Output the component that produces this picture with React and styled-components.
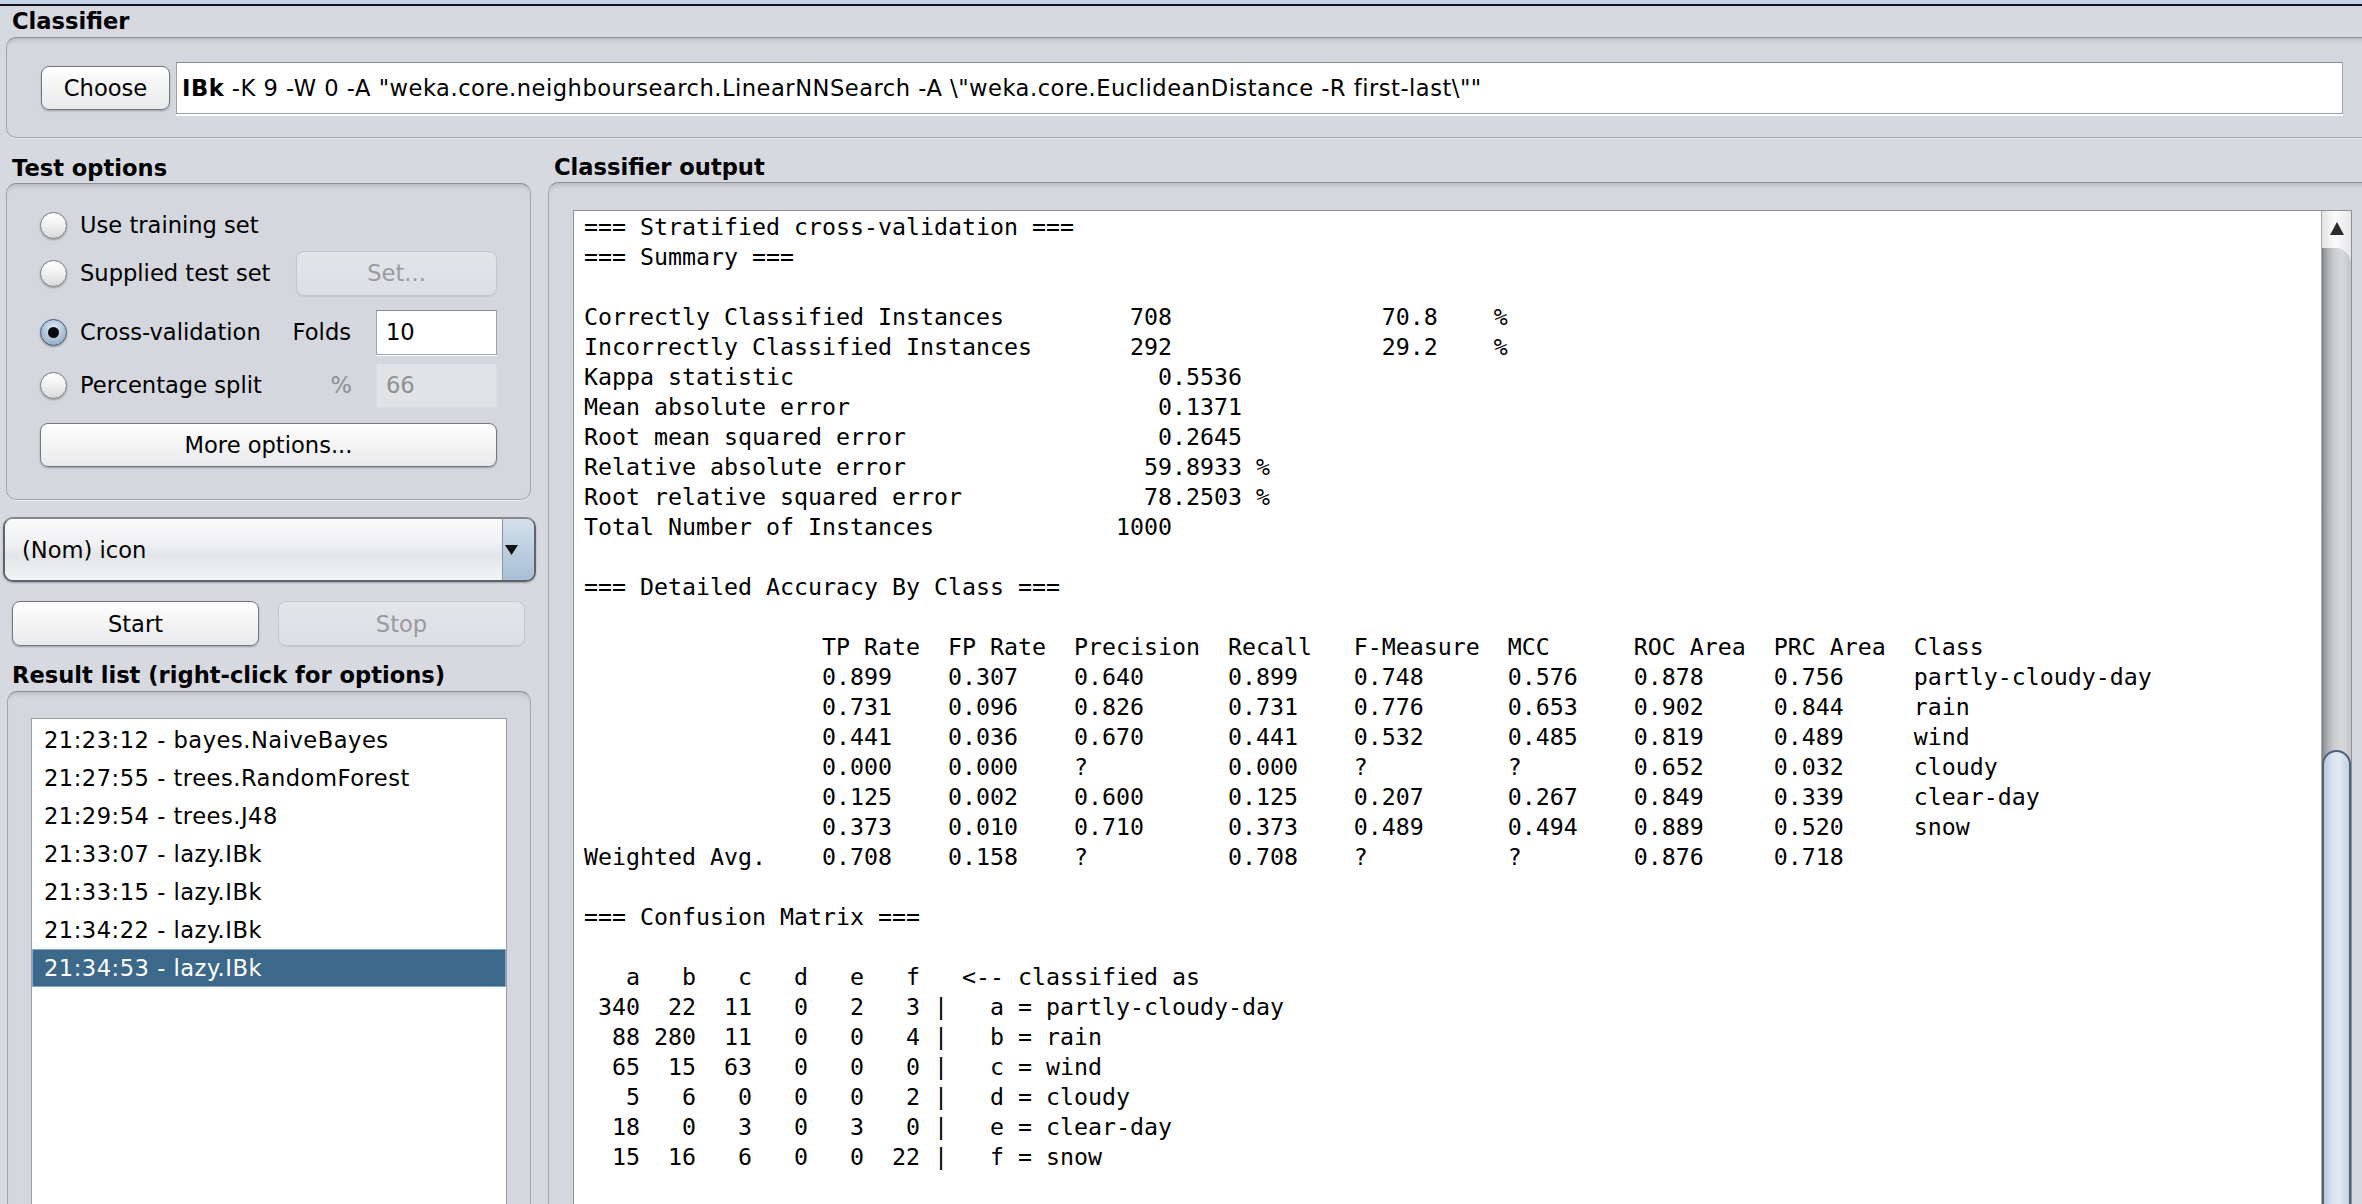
import React from "react";
import styled, { createGlobalStyle } from "styled-components";

const UI_FONT = `"DejaVu Sans", "Liberation Sans", sans-serif`;
const MONO_FONT = `"DejaVu Sans Mono", "Liberation Mono", monospace`;
const BG = "#d6d9e0";

const GlobalStyle = createGlobalStyle`
  html, body { margin: 0; padding: 0; background: ${BG}; }
  body { font-family: ${UI_FONT}; font-size: 22.6px; color: #000; overflow: hidden; }
  * { box-sizing: border-box; }
`;

const Window = styled.div`
  width: 2362px;
  height: 1204px;
  overflow: hidden;
  display: flex;
  flex-direction: column;
  background: ${BG};
`;

const TopStrip = styled.div`
  flex: none;
  height: 6px;
  background: #c6d6ea;
  border-bottom: 2px solid #11131c;
`;

const SectionTitle = styled.div`
  flex: none;
  height: ${(p) => p.$h ?? 30}px;
  line-height: 30px;
  margin-top: ${(p) => p.$mt ?? 0}px;
  padding-left: ${(p) => p.$pl ?? 12}px;
  font-weight: bold;
  white-space: nowrap;
`;

const GroupBox = styled.div`
  flex: none;
  border: 1px solid #a2a5ab;
  border-top-color: #8b8e94;
  border-radius: 10px;
  background: #d4d7de;
  box-shadow: inset 0 5px 4px -3px rgba(0, 0, 0, 0.14), 0 1px 0 rgba(255, 255, 255, 0.5);
`;

const ClassifierBox = styled(GroupBox)`
  margin: 0 -12px 0 6px;
  height: 101px;
  display: flex;
  align-items: center;
  padding: 0 30px 0 34px;
`;

const AquaButton = styled.button`
  flex: none;
  font: inherit;
  width: ${(p) => p.$w}px;
  height: ${(p) => p.$h ?? 45}px;
  padding: 0;
  color: ${(p) => (p.disabled ? "#9a9b9e" : "#000")};
  border: 1px solid ${(p) => (p.disabled ? "#c4c7cc" : "#76787d")};
  border-radius: 8px;
  background: ${(p) =>
    p.disabled
      ? "linear-gradient(#e3e5e9, #dcdfe4)"
      : "linear-gradient(#ffffff, #f6f6f7 40%, #e9eaec 100%)"};
  box-shadow: ${(p) => (p.disabled ? "0 1px 1px rgba(0,0,0,0.08)" : "0 1px 2px rgba(0,0,0,0.28)")};
  white-space: nowrap;
`;

const CommandField = styled.div`
  flex: 1;
  height: 52px;
  margin-left: 6px;
  line-height: 50px;
  padding-left: 5px;
  letter-spacing: 0.5px;
  background: #fff;
  border: 1px solid #9fa1a5;
  border-top-color: #8a8c90;
  box-shadow: 0 2px 0 #fff;
  white-space: pre;
  overflow: hidden;
`;

const Columns = styled.div`
  flex: 1;
  min-height: 0;
  display: grid;
  grid-template-columns: 548px 1fr;
`;

const Column = styled.div`
  display: flex;
  flex-direction: column;
  min-height: 0;
  min-width: 0;
`;

const TestBox = styled(GroupBox)`
  margin-left: 6px;
  width: 525px;
  height: 317px;
  display: flex;
  flex-direction: column;
  padding: 17px 33px 0 33px;
`;

const OptionRow = styled.div`
  flex: none;
  height: ${(p) => p.$h ?? 48}px;
  margin-top: ${(p) => p.$mt ?? 0}px;
  display: flex;
  align-items: center;
`;

const RadioLabel = styled.label`
  flex: 1;
  display: flex;
  align-items: center;
  gap: 13px;
  white-space: nowrap;
`;

const RadioCircle = styled.span`
  flex: none;
  width: 27px;
  height: 27px;
  border-radius: 50%;
  display: flex;
  align-items: center;
  justify-content: center;
  border: 1px solid ${(p) => (p.$checked ? "#3f5873" : "#7b7d82")};
  background: ${(p) =>
    p.$checked
      ? "radial-gradient(circle at 50% 35%, #e6eef6 0%, #b5c9dc 45%, #7f9cb8 100%)"
      : "linear-gradient(#ffffff, #f0f0f1 50%, #d9dadc)"};
  box-shadow: 0 1px 2px rgba(0, 0, 0, 0.3);
  &::after {
    content: "";
    display: ${(p) => (p.$checked ? "block" : "none")};
    width: 11px;
    height: 11px;
    border-radius: 50%;
    background: #0a0a0a;
  }
`;

const FieldGroup = styled.div`
  flex: none;
  display: flex;
  align-items: center;
  gap: ${(p) => p.$gap ?? 24}px;
`;

const FieldLabel = styled.span`
  color: ${(p) => (p.$muted ? "#8d8e91" : "#000")};
`;

const SmallField = styled.div`
  width: 121px;
  height: 45px;
  display: flex;
  align-items: center;
  padding-left: 9px;
  color: ${(p) => (p.$disabled ? "#8f9093" : "#000")};
  background: ${(p) => (p.$disabled ? "#e1e3e7" : "#fff")};
  border: 1px solid ${(p) => (p.$disabled ? "#d9dce0" : "#a1a3a7")};
  border-top-color: ${(p) => (p.$disabled ? "#d2d5da" : "#8a8c90")};
  box-shadow: ${(p) => (p.$disabled ? "none" : "0 1px 0 #fff")};
`;

const Combo = styled.div`
  flex: none;
  margin: 17px 0 0 3px;
  width: 533px;
  height: 65px;
  display: flex;
  border: 2px solid #5f636b;
  border-top-color: #85888e;
  border-radius: 10px;
  overflow: hidden;
  box-shadow: 0 1px 2px rgba(0, 0, 0, 0.25);
`;

const ComboText = styled.div`
  flex: 1;
  display: flex;
  align-items: center;
  padding-left: 17px;
  background: linear-gradient(#fbfbfc, #f0f1f3 40%, #e4e5e8 60%, #f3f4f6);
`;

const ComboArrow = styled.div`
  flex: none;
  width: 32px;
  display: flex;
  align-items: center;
  padding-left: 2px;
  border-left: 1px solid #8995a3;
  background: linear-gradient(#d5e1ec, #bccfe0 50%, #a8bfd5);
`;

const ButtonRow = styled.div`
  flex: none;
  margin-top: 19px;
  padding-left: 12px;
  display: flex;
  gap: 19px;
`;

const ResultBox = styled(GroupBox)`
  flex: 1;
  margin: 1px 0 -30px 7px;
  width: 524px;
  padding: 26px 23px 0 23px;
  display: flex;
`;

const ResultList = styled.div`
  flex: 1;
  background: #fff;
  border: 1px solid #9a9da2;
  padding-top: 2px;
`;

const ResultItem = styled.div`
  height: 38px;
  display: flex;
  align-items: center;
  padding-left: 11px;
  letter-spacing: 0.5px;
  white-space: nowrap;
  color: ${(p) => (p.$selected ? "#fff" : "#000")};
  background: ${(p) => (p.$selected ? "#3c6889" : "transparent")};
  border: 1px solid ${(p) => (p.$selected ? "#80a7cd" : "transparent")};
`;

const OutputBox = styled(GroupBox)`
  flex: 1;
  margin: 0 -12px -30px 0;
  padding: 27px 21px 0 24px;
  display: flex;
`;

const OutputArea = styled.div`
  flex: 1;
  display: flex;
  background: #fff;
  border: 1px solid #8e9196;
  min-width: 0;
`;

const OutputText = styled.pre`
  flex: 1;
  margin: 0;
  padding: 1px 0 0 10px;
  font-family: ${MONO_FONT};
  font-size: 23.25px;
  line-height: 30px;
  color: #000;
  overflow: hidden;
`;

const Scrollbar = styled.div`
  flex: none;
  width: 30px;
  display: flex;
  flex-direction: column;
  border-left: 1px solid #a7a9ad;
  background: linear-gradient(to right, #e2e3e5, #fbfbfc 45%, #e6e7e9);
`;

const ScrollUp = styled.div`
  flex: none;
  height: 37px;
  display: flex;
  justify-content: center;
  padding-top: 11px;
`;

const ScrollTrack = styled.div`
  flex: 1;
  position: relative;
  border-top-right-radius: 15px 16px;
  background: linear-gradient(to right, #7f8286 0%, #a5a7ab 14%, #c9cbce 40%, #d7d8da 70%, #c3c5c8 100%);
`;

const ScrollThumb = styled.div`
  position: absolute;
  left: 0;
  right: 0;
  top: 502px;
  bottom: -10px;
  border: 2px solid #4f6177;
  border-radius: 16px 16px 0 0;
  background: linear-gradient(to right, #b4c8db, #d9e5f0 35%, #e3ecf5 60%, #bfd1e2);
`;

const OUTPUT = `=== Stratified cross-validation ===
=== Summary ===

Correctly Classified Instances         708               70.8    %
Incorrectly Classified Instances       292               29.2    %
Kappa statistic                          0.5536
Mean absolute error                      0.1371
Root mean squared error                  0.2645
Relative absolute error                 59.8933 %
Root relative squared error             78.2503 %
Total Number of Instances             1000     

=== Detailed Accuracy By Class ===

                 TP Rate  FP Rate  Precision  Recall   F-Measure  MCC      ROC Area  PRC Area  Class
                 0.899    0.307    0.640      0.899    0.748      0.576    0.878     0.756     partly-cloudy-day
                 0.731    0.096    0.826      0.731    0.776      0.653    0.902     0.844     rain
                 0.441    0.036    0.670      0.441    0.532      0.485    0.819     0.489     wind
                 0.000    0.000    ?          0.000    ?          ?        0.652     0.032     cloudy
                 0.125    0.002    0.600      0.125    0.207      0.267    0.849     0.339     clear-day
                 0.373    0.010    0.710      0.373    0.489      0.494    0.889     0.520     snow
Weighted Avg.    0.708    0.158    ?          0.708    ?          ?        0.876     0.718     

=== Confusion Matrix ===

   a   b   c   d   e   f   <-- classified as
 340  22  11   0   2   3 |   a = partly-cloudy-day
  88 280  11   0   0   4 |   b = rain
  65  15  63   0   0   0 |   c = wind
   5   6   0   0   0   2 |   d = cloudy
  18   0   3   0   3   0 |   e = clear-day
  15  16   6   0   0  22 |   f = snow
`;

const RESULTS = [
  "21:23:12 - bayes.NaiveBayes",
  "21:27:55 - trees.RandomForest",
  "21:29:54 - trees.J48",
  "21:33:07 - lazy.IBk",
  "21:33:15 - lazy.IBk",
  "21:34:22 - lazy.IBk",
  "21:34:53 - lazy.IBk",
];

const COMMAND =
  ' -K 9 -W 0 -A "weka.core.neighboursearch.LinearNNSearch -A \\"weka.core.EuclideanDistance -R first-last\\""';

function Radio({ checked, children }) {
  return (
    <RadioLabel>
      <RadioCircle $checked={checked} />
      {children}
    </RadioLabel>
  );
}

export default function App() {
  return (
    <>
      <GlobalStyle />
      <Window>
        <TopStrip />
        <SectionTitle $h={31}>Classifier</SectionTitle>
        <ClassifierBox>
          <AquaButton $w={129} $h={44}>Choose</AquaButton>
          <CommandField>
            <b>IBk</b>
            {COMMAND}
          </CommandField>
        </ClassifierBox>

        <Columns>
          <Column>
            <SectionTitle $mt={15}>Test options</SectionTitle>
            <TestBox>
              <OptionRow>
                <Radio>Use training set</Radio>
              </OptionRow>
              <OptionRow>
                <Radio>Supplied test set</Radio>
                <AquaButton $w={201} disabled>
                  Set...
                </AquaButton>
              </OptionRow>
              <OptionRow $mt={11}>
                <Radio checked>Cross-validation</Radio>
                <FieldGroup $gap={25}>
                  <FieldLabel>Folds</FieldLabel>
                  <SmallField>10</SmallField>
                </FieldGroup>
              </OptionRow>
              <OptionRow $mt={5}>
                <Radio>Percentage split</Radio>
                <FieldGroup $gap={24}>
                  <FieldLabel $muted>%</FieldLabel>
                  <SmallField $disabled>66</SmallField>
                </FieldGroup>
              </OptionRow>
              <OptionRow $mt={14} $h={44}>
                <AquaButton $w={457} $h={44}>
                  More options...
                </AquaButton>
              </OptionRow>
            </TestBox>

            <Combo>
              <ComboText>(Nom) icon</ComboText>
              <ComboArrow>
                <svg width="13" height="10" viewBox="0 0 13 10">
                  <polygon points="0,0 13,0 6.5,10" fill="#111" />
                </svg>
              </ComboArrow>
            </Combo>

            <ButtonRow>
              <AquaButton $w={247}>Start</AquaButton>
              <AquaButton $w={247} disabled>
                Stop
              </AquaButton>
            </ButtonRow>

            <SectionTitle $mt={14}>Result list (right-click for options)</SectionTitle>
            <ResultBox>
              <ResultList>
                {RESULTS.map((r, i) => (
                  <ResultItem key={i} $selected={i === RESULTS.length - 1}>
                    {r}
                  </ResultItem>
                ))}
              </ResultList>
            </ResultBox>
          </Column>

          <Column>
            <SectionTitle $mt={14} $pl={6}>
              Classifier output
            </SectionTitle>
            <OutputBox>
              <OutputArea>
                <OutputText>{OUTPUT}</OutputText>
                <Scrollbar>
                  <ScrollUp>
                    <svg width="14" height="13" viewBox="0 0 14 13">
                      <polygon points="7,0 14,13 0,13" fill="#2b2b2b" />
                    </svg>
                  </ScrollUp>
                  <ScrollTrack>
                    <ScrollThumb />
                  </ScrollTrack>
                </Scrollbar>
              </OutputArea>
            </OutputBox>
          </Column>
        </Columns>
      </Window>
    </>
  );
}
